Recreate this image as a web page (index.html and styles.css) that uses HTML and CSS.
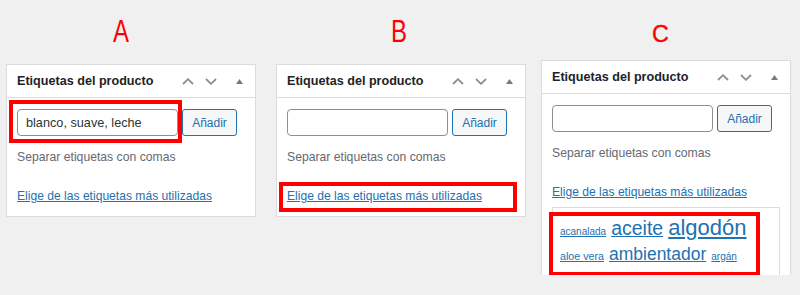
FILE: index.html
```html
<!DOCTYPE html>
<html lang="es">
<head>
<meta charset="utf-8">
<title>Etiquetas del producto</title>
<link rel="stylesheet" href="styles.css">
</head>
<body>
<div class="page">
  <div class="col col-a">
    <div class="letter letter-ab pad-a"><span class="glyph glyph-ab">A</span></div>
    <div class="panel">
      <div class="panel-head">
        <h2 class="title">Etiquetas del producto</h2>
        <div class="controls">
          <svg class="chev chev-up" width="12" height="7" viewBox="0 0 12 7"><polyline points="1,6 6,1.2 11,6" fill="none" stroke="#8c8f94" stroke-width="1.8"/></svg>
          <svg class="chev chev-down" width="12" height="7" viewBox="0 0 12 7"><polyline points="1,1 6,5.8 11,1" fill="none" stroke="#8c8f94" stroke-width="1.8"/></svg>
          <svg class="tri" width="7" height="5" viewBox="0 0 7 5"><polygon points="0,5 3.5,0 7,5" fill="#787c82"/></svg>
        </div>
      </div>
      <div class="panel-body">
        <div class="add-row">
          <input class="tag-input" type="text" value="blanco, suave, leche">
          <button class="add-btn" type="button">Añadir</button>
        </div>
        <p class="howto">Separar etiquetas con comas</p>
        <a class="choose" href="#">Elige de las etiquetas más utilizadas</a>
      </div>
      <div class="highlight hl-a"></div>
    </div>
  </div>

  <div class="col col-b">
    <div class="letter letter-ab pad-b"><span class="glyph glyph-ab">B</span></div>
    <div class="panel">
      <div class="panel-head">
        <h2 class="title">Etiquetas del producto</h2>
        <div class="controls">
          <svg class="chev chev-up" width="12" height="7" viewBox="0 0 12 7"><polyline points="1,6 6,1.2 11,6" fill="none" stroke="#8c8f94" stroke-width="1.8"/></svg>
          <svg class="chev chev-down" width="12" height="7" viewBox="0 0 12 7"><polyline points="1,1 6,5.8 11,1" fill="none" stroke="#8c8f94" stroke-width="1.8"/></svg>
          <svg class="tri" width="7" height="5" viewBox="0 0 7 5"><polygon points="0,5 3.5,0 7,5" fill="#787c82"/></svg>
        </div>
      </div>
      <div class="panel-body">
        <div class="add-row">
          <input class="tag-input" type="text" value="">
          <button class="add-btn" type="button">Añadir</button>
        </div>
        <p class="howto">Separar etiquetas con comas</p>
        <a class="choose" href="#">Elige de las etiquetas más utilizadas</a>
      </div>
      <div class="highlight hl-b"></div>
    </div>
  </div>

  <div class="col col-c">
    <div class="letter letter-c"><span class="glyph glyph-c">C</span></div>
    <div class="panel panel-cut">
      <div class="panel-head">
        <h2 class="title">Etiquetas del producto</h2>
        <div class="controls">
          <svg class="chev chev-up" width="12" height="7" viewBox="0 0 12 7"><polyline points="1,6 6,1.2 11,6" fill="none" stroke="#8c8f94" stroke-width="1.8"/></svg>
          <svg class="chev chev-down" width="12" height="7" viewBox="0 0 12 7"><polyline points="1,1 6,5.8 11,1" fill="none" stroke="#8c8f94" stroke-width="1.8"/></svg>
          <svg class="tri" width="7" height="5" viewBox="0 0 7 5"><polygon points="0,5 3.5,0 7,5" fill="#787c82"/></svg>
        </div>
      </div>
      <div class="panel-body">
        <div class="add-row">
          <input class="tag-input" type="text" value="">
          <button class="add-btn" type="button">Añadir</button>
        </div>
        <p class="howto">Separar etiquetas con comas</p>
        <a class="choose" href="#">Elige de las etiquetas más utilizadas</a>
        <div class="tagcloud">
          <div class="tag-row row-1">
            <a class="tag t-acanalada" href="#">acanalada</a>
            <a class="tag t-aceite" href="#">aceite</a>
            <a class="tag t-algodon" href="#">algodón</a>
          </div>
          <div class="tag-row row-2">
            <a class="tag t-aloe" href="#">aloe vera</a>
            <a class="tag t-ambientador" href="#">ambientador</a>
            <a class="tag t-argan" href="#">argán</a>
          </div>
        </div>
      </div>
      <div class="highlight hl-c"></div>
    </div>
  </div>
</div>
</body>
</html>
```

FILE: styles.css
```css
html, body {
  margin: 0;
  padding: 0;
}

body {
  background: #f0f0f1;
  font-family: "Liberation Sans", Arial, Helvetica, sans-serif;
  color: #1d2327;
  width: 800px;
  height: 295px;
  overflow: hidden;
}

.page {
  display: flex;
  align-items: flex-start;
  gap: 15px;
  padding-left: 6px;
}

.col {
  width: 250px;
  flex: 0 0 250px;
}

.col-b {
  margin-left: 5px;
}

.letter {
  box-sizing: border-box;
  color: #ff0000;
  white-space: nowrap;
}

.letter-ab {
  height: 64px;
  padding-top: 15px;
  font-size: 32px;
  line-height: 32px;
}

.pad-a {
  padding-left: 107px;
}

.pad-b {
  padding-left: 115px;
}

.letter-c {
  height: 60px;
  padding-top: 21px;
  padding-left: 111px;
  font-size: 24.5px;
  line-height: 25px;
}

.glyph {
  display: inline-block;
  transform-origin: left center;
}

.glyph-ab {
  transform: scaleX(0.75);
}

.glyph-c {
  transform: scaleX(0.95);
  -webkit-text-stroke: 0.4px #ff0000;
}

.panel {
  position: relative;
  background: #fff;
  border: 1px solid #dcdcde;
}

.panel-cut {
  box-sizing: border-box;
  height: 215px;
  border-bottom: 0;
  overflow: hidden;
}

.panel-head {
  display: flex;
  align-items: center;
  height: 32px;
  padding: 0 12px 0 10px;
  border-bottom: 1px solid #dcdcde;
}

.title {
  margin: 0;
  font-size: 12.6px;
  font-weight: bold;
  color: #1d2327;
  white-space: nowrap;
}

.controls {
  margin-left: auto;
  display: flex;
  align-items: center;
}

.chev,
.tri {
  display: block;
}

.chev-up {
  margin-right: 11px;
}

.chev-down {
  margin-right: 19px;
}

.panel-body {
  padding: 11px 10px 11px 10px;
}

.add-row {
  display: flex;
  gap: 4px;
}

.tag-input {
  box-sizing: border-box;
  width: 161px;
  height: 27px;
  margin: 0;
  padding: 0 8px;
  border: 1px solid #8c8f94;
  border-radius: 4px;
  background: #fff;
  font-family: "Liberation Sans", Arial, sans-serif;
  font-size: 12.7px;
  color: #2c3338;
  outline: none;
}

.add-btn {
  box-sizing: border-box;
  width: 55px;
  height: 27px;
  margin: 0;
  padding: 0;
  border: 1px solid #2271b1;
  border-radius: 3px;
  background: #f6f7f7;
  color: #2271b1;
  font-family: "Liberation Sans", Arial, sans-serif;
  font-size: 12px;
}

.howto {
  margin: 12px 0 0;
  font-size: 12.2px;
  line-height: 18px;
  color: #646970;
  white-space: nowrap;
}

.choose {
  display: block;
  margin-top: 21px;
  font-size: 12.1px;
  line-height: 18px;
  color: #2271b1;
  text-decoration: underline;
  white-space: nowrap;
}

.tagcloud {
  margin-top: 6px;
  border: 1px solid #dcdcde;
  padding: 9px 0 20px 7px;
}

.tag-row {
  display: flex;
  align-items: baseline;
  gap: 5px;
  white-space: nowrap;
}

.row-2 {
  margin-top: 7px;
}

.tag {
  color: #2271b1;
  text-decoration: underline;
  line-height: 1;
}

.t-acanalada { font-size: 10px; }
.t-aceite { font-size: 19.5px; }
.t-algodon { font-size: 22px; }
.t-aloe { font-size: 10.7px; }
.t-ambientador { font-size: 17.5px; }
.t-argan { font-size: 10px; }

.highlight {
  position: absolute;
  box-sizing: border-box;
  border: 4px solid #ff0000;
  pointer-events: none;
}

.hl-a {
  left: 2px;
  top: 35px;
  width: 173px;
  height: 43px;
}

.hl-b {
  left: 2px;
  top: 117px;
  width: 238px;
  height: 30px;
}

.hl-c {
  left: 7px;
  top: 151px;
  width: 211px;
  height: 64px;
}
```
